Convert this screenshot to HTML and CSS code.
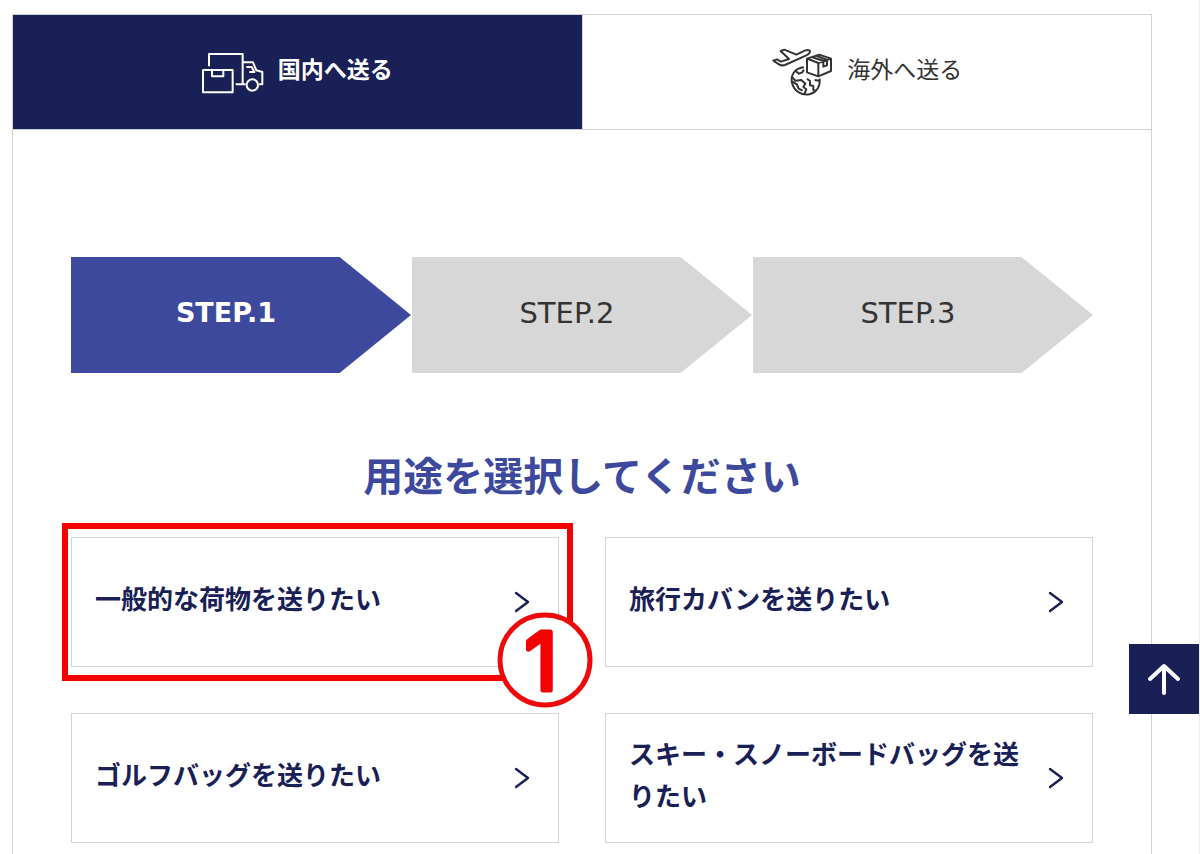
FILE: index.html
```
<!DOCTYPE html>
<html lang="ja">
<head>
    <meta charset="UTF-8">
    <meta name="viewport" content="width=device-width, initial-scale=1.0">
    <title>荷物を送る</title>
    <link rel="stylesheet" href="styles.css">
</head>
<body>
    <main class="container">
        <div class="tabs">
            <button type="button" class="tab on">
                <svg class="tab-icon" viewBox="33 19 186 156" aria-hidden="true">
                    <path d="M54 80V43H155V134H134M155 68H186L196 92L214 97V134H204M164 134H155M166 82H182L190 97H175"/>
                    <path d="M36 91H125V158H36ZM63 91V110H97V91"/>
                    <circle cx="184" cy="136" r="17"/>
                </svg>
                <span>国内へ送る</span>
            </button>
            <button type="button" class="tab">
                <svg class="tab-icon" viewBox="33 30 186 156" aria-hidden="true">
                    <path d="M40 74L51 70L63 77L87 69L62 45L73 41L109 56L134 44Q147 39 150 45Q151 52 139 58L75 87Q65 90 57 85Z"/>
                    <path d="M141 68L178 56L213 68V105L175 121L141 109ZM141 68L175 81L213 68M175 81V121M156 63L190 75V92L201 88V72L168 59"/>
                    <path d="M132 94C104 96 91 118 96 140C102 166 126 181 151 174C170 168 181 151 179 128"/>
                    <path d="M107 105L117 113L127 109L132 101M97 124L106 134L124 132L136 143L130 153L139 160L133 174M97 136L111 146L116 158L128 164M141 128L150 135V148L160 150V162L166 164M164 132L178 134"/>
                </svg>
                <span>海外へ送る</span>
            </button>
        </div>
        <div class="panel">
            <ol class="steps">
                <li class="step on">STEP.1</li>
                <li class="step">STEP.2</li>
                <li class="step">STEP.3</li>
            </ol>
            <h1 class="title">用途を選択してください</h1>
            <div class="cards">
                <div class="card-wrap">
                    <a href="#" class="card">
                        <span class="card-text">一般的な荷物を送りたい</span>
                        <svg class="arrow" viewBox="0 0 16 22" aria-hidden="true"><path d="M2 2L14 11L2 20"/></svg>
                    </a>
                    <div class="mark">
                        <svg class="mark-number" viewBox="0 0 96 96">
                            <circle cx="48" cy="48" r="45"/>
                            <text x="44" y="78" text-anchor="middle">1</text>
                        </svg>
                    </div>
                </div>
                <a href="#" class="card">
                    <span class="card-text">旅行カバンを送りたい</span>
                    <svg class="arrow" viewBox="0 0 16 22" aria-hidden="true"><path d="M2 2L14 11L2 20"/></svg>
                </a>
                <a href="#" class="card">
                    <span class="card-text">ゴルフバッグを送りたい</span>
                    <svg class="arrow" viewBox="0 0 16 22" aria-hidden="true"><path d="M2 2L14 11L2 20"/></svg>
                </a>
                <a href="#" class="card">
                    <span class="card-text">スキー・スノーボードバッグを送りたい</span>
                    <svg class="arrow" viewBox="0 0 16 22" aria-hidden="true"><path d="M2 2L14 11L2 20"/></svg>
                </a>
            </div>
        </div>
    </main>
    <a href="#" class="pagetop" aria-label="ページの先頭へ">
        <svg viewBox="0 0 34 34" aria-hidden="true"><path d="M17 31V4M3 17L17 4L31 17"/></svg>
    </a>
</body>
</html>
```

FILE: styles.css
```
*{
    margin: 0;
    padding: 0;
    box-sizing: border-box;
}
body{
    padding: 14px 47px 0 12px;
    border-right: 1px solid #eee;
    background: #fff;
    color: #333;
    font-family: "Liberation Sans", "Noto Sans CJK JP", sans-serif;
}
.container{
    border: 1px solid #d3d3d3;
}
.tabs{
    display: flex;
    border-bottom: 1px solid #d3d3d3;
}
.tab{
    flex: 1;
    display: flex;
    align-items: center;
    justify-content: center;
    gap: 14px;
    height: 114px;
    border: 0;
    background: #fff;
    color: #333;
    font-family: inherit;
    font-size: 23px;
    line-height: 32px;
    cursor: pointer;
}
.tab + .tab{
    border-left: 1px solid #d3d3d3;
}
.tab.on{
    background: #192056;
    color: #fff;
    font-weight: bold;
}
.tab span{
    padding-bottom: 4px;
}
.tab-icon{
    width: 62px;
    height: 52px;
    fill: none;
    stroke: currentColor;
    stroke-width: 6;
    stroke-linejoin: round;
}
.panel{
    padding: 127px 58px 46px;
}
.steps{
    display: flex;
    gap: 1px;
    list-style: none;
}
.step{
    flex: 1;
    height: 116px;
    padding-right: 30px;
    background: #d7d7d7;
    clip-path: polygon(0 0, 79% 0, 100% 50%, 79% 100%, 0 100%);
    font-family: "DejaVu Sans", sans-serif;
    font-size: 29px;
    line-height: 112px;
    text-align: center;
}
.step.on{
    background: #3d499d;
    color: #fff;
    font-size: 27px;
    font-weight: bold;
}
.title{
    margin: 74px 0 30px;
    color: #3d499d;
    font-size: 40px;
    line-height: 60px;
    text-align: center;
}
.cards{
    display: grid;
    grid-template-columns: 1fr 1fr;
    gap: 46px;
}
.card-wrap{
    position: relative;
}
.card{
    display: flex;
    align-items: center;
    justify-content: space-between;
    height: 130px;
    padding: 0 28px 0 23px;
    border: 1px solid #d3d3d3;
    color: #192056;
    font-size: 26px;
    font-weight: bold;
    line-height: 42px;
    text-decoration: none;
}
.card-text{
    max-width: 392px;
    padding-bottom: 4px;
}
.arrow{
    flex: none;
    width: 16px;
    height: 22px;
    fill: none;
    stroke: #192056;
    stroke-width: 2.4;
    stroke-linecap: round;
    stroke-linejoin: round;
}
.mark{
    position: absolute;
    top: -14px;
    right: -14px;
    bottom: -14px;
    left: -9px;
    border: 6px solid #f50000;
    pointer-events: none;
}
.mark-number{
    position: absolute;
    right: -26px;
    bottom: -33px;
    width: 96px;
    height: 96px;
    overflow: visible;
}
.mark-number circle{
    fill: #fff;
    stroke: #ee0a0a;
    stroke-width: 5;
}
.mark-number text{
    fill: #f50000;
    stroke: #f50000;
    stroke-width: 5;
    stroke-linejoin: round;
    font-family: Inter, sans-serif;
    font-size: 80px;
}
.pagetop{
    position: fixed;
    right: 1px;
    bottom: 140px;
    display: flex;
    align-items: center;
    justify-content: center;
    width: 70px;
    height: 70px;
    background: #192056;
}
.pagetop svg{
    width: 34px;
    height: 34px;
    fill: none;
    stroke: #fff;
    stroke-width: 4;
    stroke-linecap: round;
    stroke-linejoin: round;
}
```
